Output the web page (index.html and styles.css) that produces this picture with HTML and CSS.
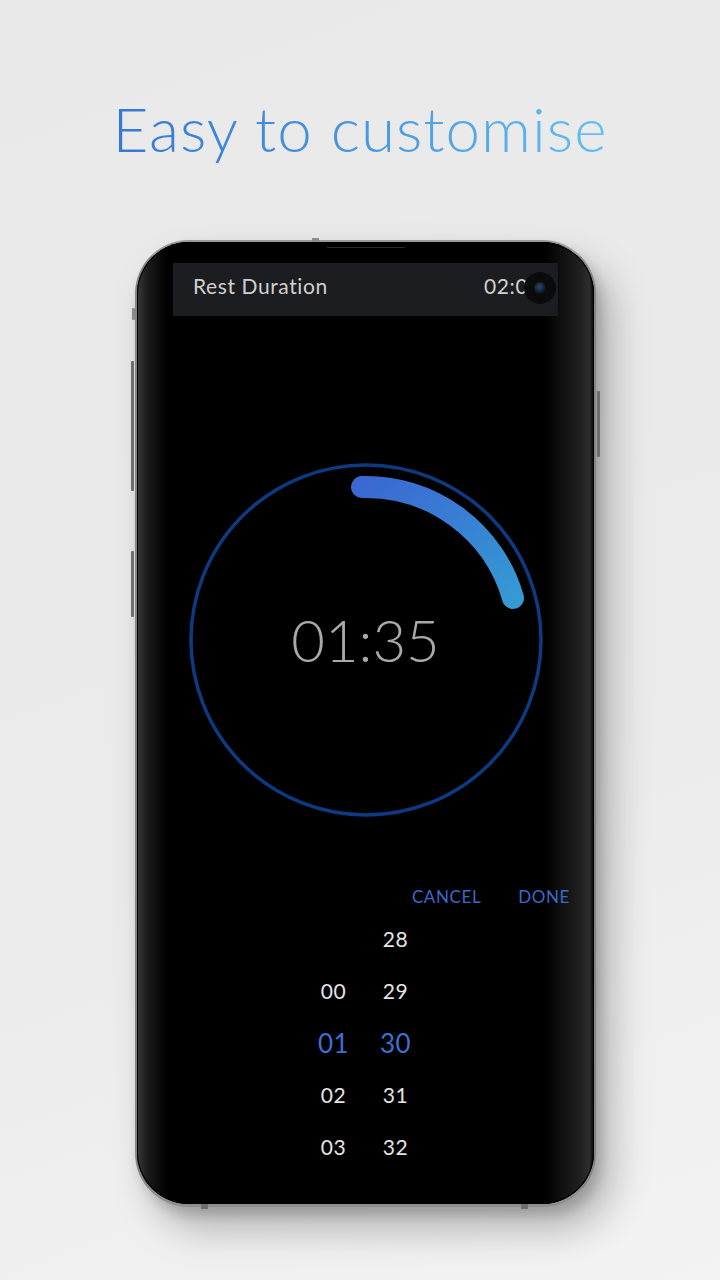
FILE: index.html
```html
<!DOCTYPE html>
<html>
<head>
<meta charset="utf-8">
<link rel="stylesheet" href="styles.css">
</head>
<body>
<div class="page">
  <h1 class="title">Easy to customise</h1>
  <div class="phone-wrap">
    <div class="phone">
      <span class="btn btn-l1"></span>
      <span class="btn btn-l2"></span>
      <span class="btn btn-l3"></span>
      <span class="btn btn-r1"></span>
      <span class="top-notch"></span>
      <span class="speaker"></span>
      <span class="bot-mark bot-mark-l"></span>
      <span class="bot-mark bot-mark-r"></span>
      <div class="screen">
        <div class="header">
          <span class="header-title">Rest Duration</span>
          <span class="header-time">02:00</span>
          <span class="camera"><span class="lens"></span></span>
        </div>
        <div class="ring">
          <svg width="370" height="370" viewBox="0 0 370 370">
            <defs>
              <linearGradient id="arcg" x1="0" y1="0" x2="1" y2="1">
                <stop offset="0" stop-color="#3a69d2"/>
                <stop offset="1" stop-color="#3599d4"/>
              </linearGradient>
            </defs>
            <circle cx="185" cy="185" r="175" fill="none" stroke="#0d3a80" stroke-width="3.5"/>
            <path d="M 181 32 A 153 153 0 0 1 332 143" fill="none" stroke="url(#arcg)" stroke-width="22" stroke-linecap="round"/>
          </svg>
          <div class="time">01:35</div>
        </div>
        <div class="actions">
          <span class="action">CANCEL</span>
          <span class="action">DONE</span>
        </div>
        <div class="picker">
          <div class="col">
            <span class="cell"></span>
            <span class="cell">00</span>
            <span class="cell sel">01</span>
            <span class="cell">02</span>
            <span class="cell">03</span>
          </div>
          <div class="col">
            <span class="cell">28</span>
            <span class="cell">29</span>
            <span class="cell sel">30</span>
            <span class="cell">31</span>
            <span class="cell">32</span>
          </div>
        </div>
      </div>
    </div>
  </div>
</div>
</body>
</html>
```

FILE: styles.css
```css
html, body {
  margin: 0;
  padding: 0;
}
body {
  width: 720px;
  height: 1280px;
  overflow: hidden;
  background: linear-gradient(160deg, #e9e9e9 0%, #ebebeb 60%, #f3f3f3 100%);
  font-family: Lato, "Open Sans", sans-serif;
}
.page {
  display: flex;
  flex-direction: column;
  align-items: center;
  width: 720px;
  height: 1280px;
}
.title {
  margin: 92px 0 0 0;
  font-size: 62px;
  font-weight: 300;
  line-height: 72px;
  letter-spacing: 1px;
  background: linear-gradient(90deg, #3577d6 0%, #4a9ae0 55%, #62c0f0 100%);
  -webkit-background-clip: text;
  background-clip: text;
  color: transparent;
}
.phone-wrap {
  margin-top: 76px;
  width: 720px;
  display: flex;
  justify-content: flex-start;
  padding-left: 135px;
  box-sizing: border-box;
}
.phone {
  position: relative;
  width: 461px;
  height: 967px;
  box-sizing: border-box;
  border-radius: 54px;
  background: #000;
  border: 2px solid #858585;
  border-top-color: #9a9a9a;
  border-bottom: 3px solid #8e8e8e;
  box-shadow: 16px 22px 38px rgba(0,0,0,0.26), 5px 8px 12px rgba(0,0,0,0.16);
}
.btn {
  position: absolute;
  width: 3px;
  background: #6e6e6e;
  border-radius: 1px;
}
.btn-l1 { left: -5px; top: 66px; height: 12px; background: #8a8a8a; }
.btn-l2 { left: -6px; top: 119px; height: 130px; }
.btn-l3 { left: -6px; top: 309px; height: 66px; }
.btn-r1 { right: -6px; top: 149px; height: 66px; }
.top-notch {
  position: absolute;
  top: -4px;
  left: 175px;
  width: 7px;
  height: 6px;
  background: #8d8d8d;
}
.speaker {
  position: absolute;
  top: 1px;
  left: 190px;
  width: 78px;
  height: 4px;
  border-bottom: 1px solid #2a2a2a;
  z-index: 2;
}
.bot-mark {
  position: absolute;
  bottom: -5px;
  width: 7px;
  height: 7px;
  background: #6f6f6f;
}
.bot-mark-l { left: 64px; }
.bot-mark-r { right: 66px; }
.screen {
  position: relative;
  height: 100%;
  box-sizing: border-box;
  border-radius: 52px;
  background:
    linear-gradient(90deg, #3a3a3a 0px, #1c1c1c 10px, #000 30px, #000 calc(100% - 50px), #222 calc(100% - 12px), #2e2e2e calc(100% - 5px), #050505 100%);
  box-shadow: inset 0 0 0 1px #000;
  overflow: hidden;
  padding: 21px 36px 0 36px;
  display: flex;
  flex-direction: column;
}
.header {
  position: relative;
  height: 53px;
  background: #1c1d20;
  display: flex;
  align-items: center;
  justify-content: space-between;
  padding: 0 17px 0 20px;
  font-size: 21px;
  color: #d0d0d0;
  letter-spacing: 0.6px;
}
.header-title {
  margin-top: -9px;
}
.header-time {
  margin-top: -9px;
}
.camera {
  position: absolute;
  right: 2px;
  top: 9px;
  width: 32px;
  height: 32px;
  border-radius: 50%;
  background: #0b0b0c;
  display: flex;
  align-items: center;
  justify-content: center;
}
.lens {
  width: 12px;
  height: 12px;
  border-radius: 50%;
  background: radial-gradient(circle at 45% 40%, #2a4a6a 0%, #0f1a26 60%, #050505 100%);
}
.ring {
  position: relative;
  margin-top: 139px;
  align-self: center;
  width: 370px;
  height: 370px;
}
.ring svg {
  display: block;
}
.time {
  position: absolute;
  left: 0;
  right: 0;
  top: 150px;
  text-align: center;
  font-size: 58px;
  font-weight: 300;
  line-height: 70px;
  color: #a9a9a9;
}
.actions {
  margin-top: 61px;
  display: flex;
  justify-content: flex-end;
  gap: 37px;
  margin-right: -12px;
  font-size: 17px;
  color: #3b68cc;
  letter-spacing: 0.6px;
}
.picker {
  margin-top: 6px;
  display: flex;
  justify-content: center;
  gap: 12px;
  margin-left: -2px;
}
.col {
  width: 50px;
  display: flex;
  flex-direction: column;
  align-items: center;
}
.cell {
  height: 52px;
  line-height: 52px;
  font-size: 21px;
  color: #e4e4e4;
  letter-spacing: 0.5px;
}
.cell.sel {
  font-size: 26px;
  color: #3e6fd4;
}
```
